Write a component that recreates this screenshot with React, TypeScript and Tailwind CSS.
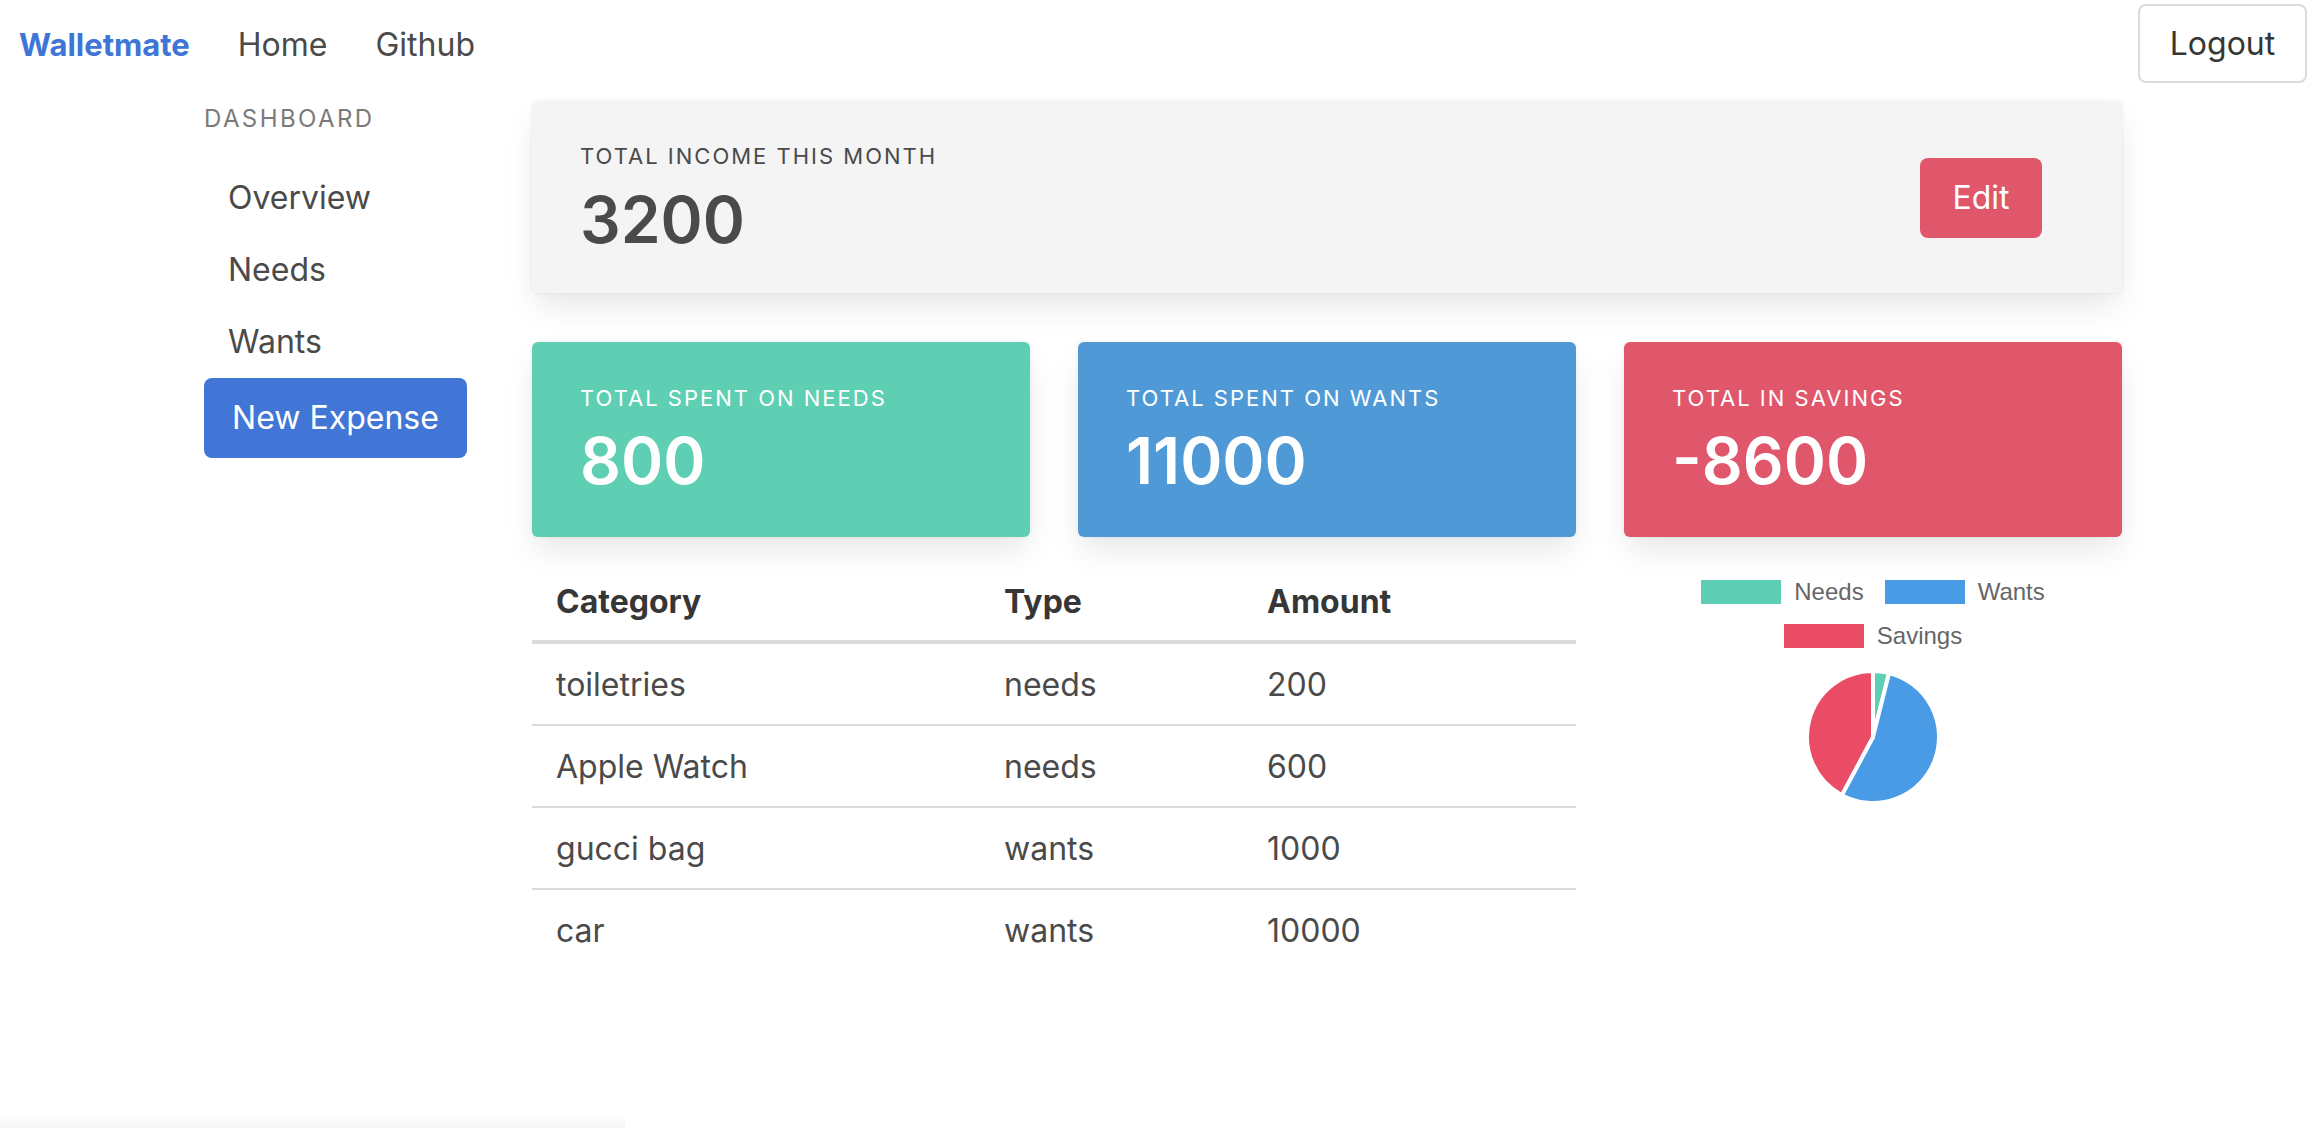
import React from "react";

const expenses = [
  { category: "toiletries", type: "needs", amount: 200 },
  { category: "Apple Watch", type: "needs", amount: 600 },
  { category: "gucci bag", type: "wants", amount: 1000 },
  { category: "car", type: "wants", amount: 10000 },
];

const slices = [
  { label: "Needs", value: 800, color: "#5ecfb4" },
  { label: "Wants", value: 11000, color: "#4a9be6" },
  { label: "Savings", value: 8600, color: "#ea4c65" },
];

const PieChart = () => {
  const cx = 70;
  const cy = 70;
  const r = 66;
  const total = slices.reduce((s, x) => s + Math.abs(x.value), 0);
  let angle = -Math.PI / 2;

  return (
    <svg width="140" height="140" viewBox="0 0 140 140">
      {slices.map((s) => {
        const sweep = (Math.abs(s.value) / total) * Math.PI * 2;
        const a0 = angle;
        const a1 = angle + sweep;
        angle = a1;
        const x0 = cx + r * Math.cos(a0);
        const y0 = cy + r * Math.sin(a0);
        const x1 = cx + r * Math.cos(a1);
        const y1 = cy + r * Math.sin(a1);
        const large = sweep > Math.PI ? 1 : 0;
        const d = `M ${cx} ${cy} L ${x0} ${y0} A ${r} ${r} 0 ${large} 1 ${x1} ${y1} Z`;
        return (
          <path key={s.label} d={d} fill={s.color} stroke="#ffffff" strokeWidth="4" strokeLinejoin="bevel" />
        );
      })}
    </svg>
  );
};

const LegendItem = ({ label, color }: { label: string; color: string }) => (
  <div className="flex items-center gap-[13px]">
    <span className="w-[80px] h-[24px]" style={{ backgroundColor: color }} />
    <span className="text-[24px] leading-[24px] text-[#666666] font-['Liberation_Sans',Arial,sans-serif]">{label}</span>
  </div>
);

const StatCard = ({ label, value, bg }: { label: string; value: string; bg: string }) => (
  <div className={`${bg} rounded-[6px] px-[48px] py-[40px] shadow-[0_16px_32px_-4px_rgba(10,10,10,0.1),0_0_0_2px_rgba(10,10,10,0.02)]`}>
    <p className="text-[22px] leading-[33px] tracking-[2px] uppercase text-white mb-[10px]">{label}</p>
    <p className="text-[64px] leading-[72px] font-semibold text-white">{value}</p>
  </div>
);

export default function App() {
  return (
    <div className="min-h-[1128px] flex flex-col bg-white font-['Inter',sans-serif] text-[#4a4a4a]">
      {/* Navbar */}
      <nav className="h-[87px] flex items-center pl-[19px] pr-[13px]">
        <div className="flex items-center gap-[48px] text-[32px] mt-[3px]">
          <a className="font-bold text-[#3e75d7] text-[31px]">Walletmate</a>
          <a>Home</a>
          <a>Github</a>
        </div>
        <button className="ml-auto w-[169px] h-[79px] border-2 border-[#dbdbdb] rounded-[8px] text-[32px] text-[#363636] bg-white">
          Logout
        </button>
      </nav>

      <div className="flex pl-[204px]">
        {/* Sidebar */}
        <aside className="w-[263px] pt-[14px]">
          <p className="text-[24px] leading-[36px] tracking-[2.4px] uppercase text-[#7a7a7a] mb-[25px]">Dashboard</p>
          <ul className="text-[32px] leading-[40px]">
            <li className="px-[24px] py-[16px]">Overview</li>
            <li className="px-[24px] py-[16px]">Needs</li>
            <li className="px-[24px] py-[16px]">Wants</li>
          </ul>
          <button className="w-[263px] h-[80px] rounded-[8px] bg-[#4176d6] text-white text-[32px]">New Expense</button>
        </aside>

        {/* Main */}
        <main className="ml-[65px] w-[1590px] pt-[14px]">
          <div className="h-[192px] bg-[#f4f4f4] rounded-[6px] pl-[48px] pr-[80px] flex items-center justify-between shadow-[0_16px_32px_-4px_rgba(10,10,10,0.1),0_0_0_2px_rgba(10,10,10,0.02)]">
            <div className="mt-[2px]">
              <p className="text-[22px] leading-[33px] tracking-[2px] uppercase mb-[11px]">Total income this month</p>
              <p className="text-[64px] leading-[72px] font-semibold">3200</p>
            </div>
            <button className="w-[122px] h-[80px] rounded-[8px] bg-[#e0566b] text-white text-[32px] mt-[2px]">Edit</button>
          </div>

          <div className="grid grid-cols-3 gap-[48px] mt-[49px]">
            <StatCard label="Total spent on needs" value="800" bg="bg-[#5ecfb2]" />
            <StatCard label="Total spent on wants" value="11000" bg="bg-[#4f9ad6]" />
            <StatCard label="Total in savings" value="-8600" bg="bg-[#e0566b]" />
          </div>

          <div className="grid grid-cols-3 gap-[48px] mt-[23px]">
            <table className="col-span-2 w-[1044px] text-[32px] leading-[48px] border-collapse">
              <thead>
                <tr className="border-b-4 border-[#dbdbdb] text-left text-[#363636]">
                  <th className="w-[448px] px-[24px] pt-[18px] pb-[14px] font-bold">Category</th>
                  <th className="w-[263px] px-[24px] pt-[18px] pb-[14px] font-bold">Type</th>
                  <th className="px-[24px] pt-[18px] pb-[14px] font-bold">Amount</th>
                </tr>
              </thead>
              <tbody>
                {expenses.map((e, i) => (
                  <tr key={e.category} className={i < expenses.length - 1 ? "border-b-2 border-[#dbdbdb]" : ""}>
                    <td className="px-[24px] pt-[17px] pb-[15px]">{e.category}</td>
                    <td className="px-[24px] pt-[17px] pb-[15px]">{e.type}</td>
                    <td className="px-[24px] pt-[17px] pb-[15px]">{e.amount}</td>
                  </tr>
                ))}
              </tbody>
            </table>

            <div className="pt-[20px] flex flex-col items-center">
              <div className="flex flex-col items-center gap-[20px]">
                <div className="flex items-center gap-[21px]">
                  <LegendItem label="Needs" color="#5ecfb4" />
                  <LegendItem label="Wants" color="#4a9be6" />
                </div>
                <LegendItem label="Savings" color="#ea4c65" />
              </div>
              <div className="mt-[19px]">
                <PieChart />
              </div>
            </div>
          </div>
        </main>
      </div>

      <div className="mt-auto h-[16px] w-[625px] bg-gradient-to-b from-white to-[#f6f6f6]" />
    </div>
  );
}
